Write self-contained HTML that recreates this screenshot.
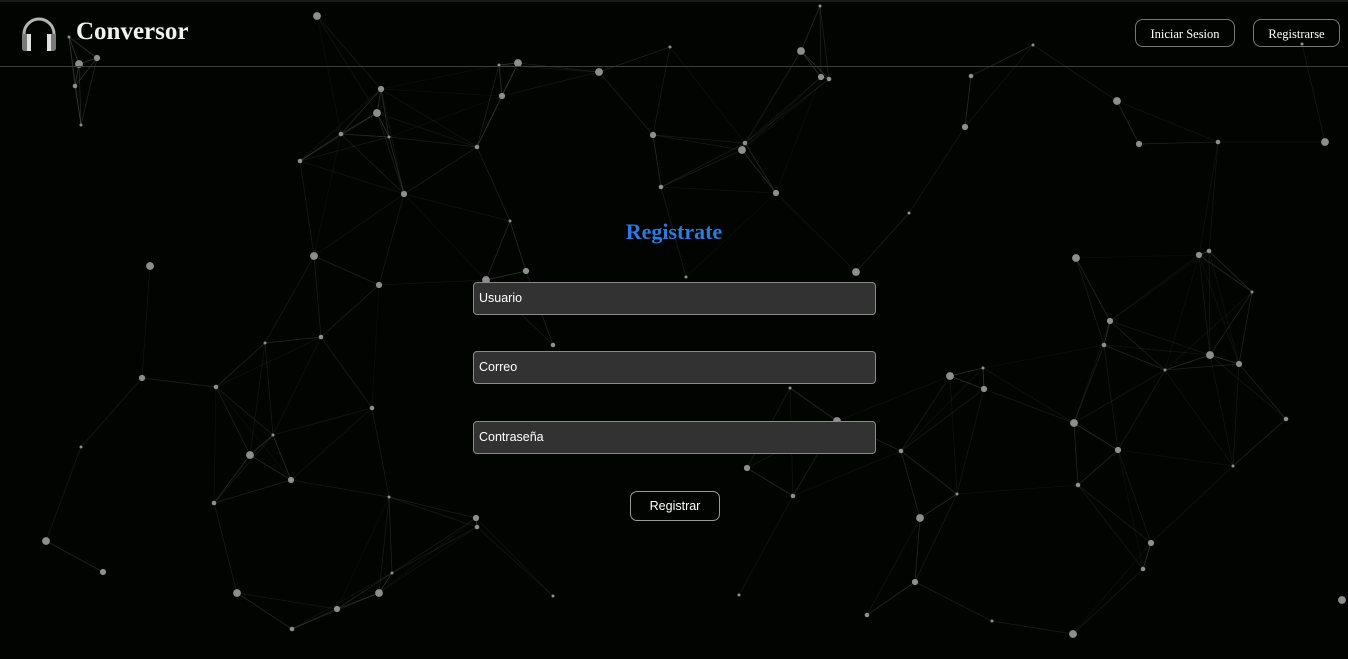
<!DOCTYPE html>
<html><head><meta charset="utf-8"><style>
html,body{margin:0;padding:0;width:1348px;height:659px;overflow:hidden;background:#020402;font-family:"Liberation Sans",sans-serif}
svg.bg{position:absolute;left:0;top:0}
.hdr{position:absolute;left:0;top:0;width:1348px;height:67px;border-bottom:1px solid #3a3d3a;border-top:2px solid #1a1c1a;box-sizing:border-box}
.logo{position:absolute;left:76px;top:18px;font-family:"Liberation Serif",serif;font-weight:bold;font-size:25px;color:#f2f2f2}
.btn{position:absolute;top:19px;height:28px;border:1px solid #777;border-radius:8px;color:#fff;font-family:"Liberation Serif",serif;font-size:12.5px;line-height:28px;text-align:center;box-sizing:border-box}
h2{position:absolute;left:0;width:1348px;top:219px;margin:0;text-align:center;color:#2a7be4;font-family:"Liberation Serif",serif;font-size:22px;font-weight:bold}
.in{position:absolute;left:473px;width:403px;height:33px;background:#323232;border:1px solid #8a8a8a;border-radius:4px;box-sizing:border-box;color:#fff;font-size:12.5px;line-height:31px;padding-left:5px}
.sub{position:absolute;left:630px;top:491px;width:90px;height:30px;border:1px solid #999;border-radius:7px;box-sizing:border-box;color:#fff;font-size:12.5px;line-height:28px;text-align:center}
</style></head><body>
<svg class="bg" width="1348" height="659" id="s"></svg>
<div class="hdr"></div>
<svg style="position:absolute;left:20px;top:16px" width="38" height="36" viewBox="0 0 38 36">
<path d="M4 24 V18 A15 15 0 0 1 34 18 V24" fill="none" stroke="#b5b5b5" stroke-width="3"/>
<path d="M2 18 H11 V35 H5 Q2 35 2 32 Z" fill="#7a7a7a"/><path d="M27 18 H36 V32 Q36 35 33 35 H27 Z" fill="#7a7a7a"/>
<rect x="7" y="18" width="4" height="17" fill="#e0e0e0"/><rect x="27" y="18" width="4" height="17" fill="#e0e0e0"/>
</svg>
<div class="logo">Conversor</div>
<div class="btn" style="left:1135px;width:100px">Iniciar Sesion</div>
<div class="btn" style="left:1253px;width:87px">Registrarse</div>
<h2>Registrate</h2>
<div class="in" style="top:282px">Usuario</div>
<div class="in" style="top:351px">Correo</div>
<div class="in" style="top:421px">Contraseña</div>
<div class="sub">Registrar</div>
<script>
var N=[[69,37],[79,64],[97,58],[75,86],[81,125],[317,16],[381,89],[341,134],[389,137],[377,113],[404,194],[300,161],[499,65],[518,63],[502,96],[477,147],[510,221],[314,256],[379,285],[321,337],[265,343],[150,266],[142,378],[216,387],[273,435],[250,455],[291,480],[214,503],[81,447],[46,541],[103,572],[372,408],[389,497],[237,593],[337,609],[292,629],[392,573],[379,593],[476,518],[477,527],[553,596],[599,72],[653,135],[661,187],[670,47],[742,150],[776,193],[745,143],[820,6],[801,51],[821,77],[829,79],[686,277],[486,280],[526,271],[553,345],[909,213],[856,272],[965,127],[971,76],[1033,45],[1117,101],[1139,144],[1218,142],[1302,44],[1325,142],[1199,255],[1209,251],[1252,292],[1076,258],[1110,321],[1104,345],[1165,370],[1210,355],[1239,364],[1286,419],[1233,466],[1074,423],[1118,450],[1078,485],[983,368],[950,376],[984,389],[901,451],[957,494],[920,518],[915,582],[867,615],[992,621],[1073,634],[1151,543],[1143,569],[790,388],[837,421],[747,468],[793,496],[739,595],[1342,600]];
var s='';
for(var i=0;i<N.length;i++)for(var j=i+1;j<N.length;j++){var dx=N[i][0]-N[j][0],dy=N[i][1]-N[j][1],d=Math.sqrt(dx*dx+dy*dy);if(d<125){var o=(0.3*(1-d/125)+0.07).toFixed(2);s+='<line x1="'+N[i][0]+'" y1="'+N[i][1]+'" x2="'+N[j][0]+'" y2="'+N[j][1]+'" stroke="rgb(150,155,150)" stroke-opacity="'+o+'" stroke-width="0.8"/>';}}
for(var i=0;i<N.length;i++){var r=1.5+((i*7)%4)*0.8;s+='<circle cx="'+N[i][0]+'" cy="'+N[i][1]+'" r="'+r+'" fill="#8e8e8e"/>';}
document.getElementById('s').innerHTML=s;
</script>
</body></html>
